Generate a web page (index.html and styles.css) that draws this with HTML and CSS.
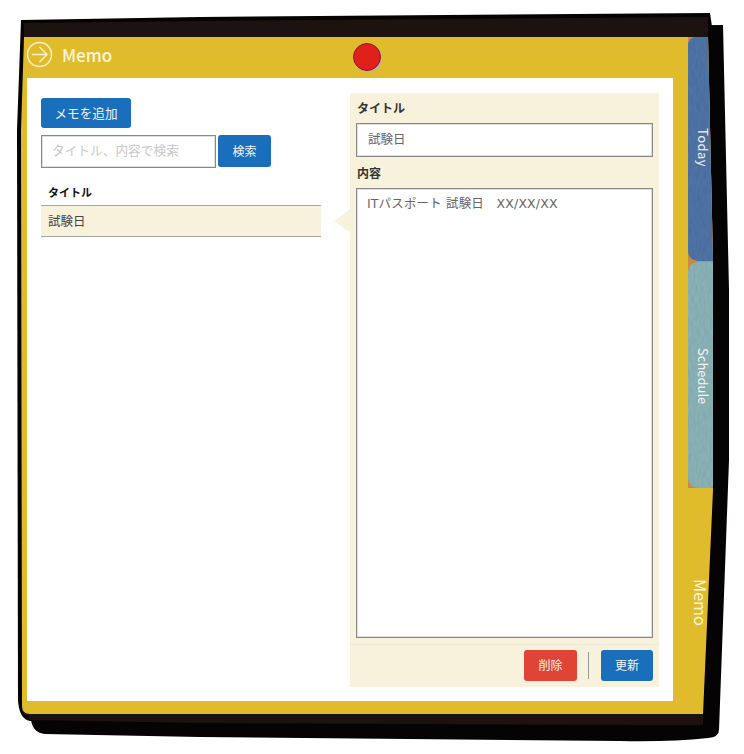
FILE: index.html
```html
<!DOCTYPE html>
<html lang="ja">
<head>
    <meta charset="UTF-8">
    <meta name="viewport" content="width=device-width, initial-scale=1.0">
    <title>Memo</title>
    <link rel="stylesheet" href="styles.css">
</head>
<body>
    <div class="screen">
        <svg class="binder" width="744" height="754" viewBox="0 0 744 754" aria-hidden="true">
            <path class="binder-shadow" d="M30 30 L723 25 L729 290 L729 460 L719 730 Q719 737 708 738 Q670 742 620 741 L200 737 L45 734 Q33 733 31 720 Z"/>
            <path class="binder-shadow" d="M21 20 L200 17 L710 13 L714 40 L714 720 L30 721 Q19 719 18 700 L17 130 Z"/>
            <path class="binder-band" d="M24 23 L200 21 L708 17 L708 60 L703 714 L703 725 L640 725 L200 723 L30 720 L24 700 Z"/>
            <path class="binder-cover" d="M24 37 L708 37 L713 260 L713 490 L703 714 L30 714 Q22 714 22 706 L21 130 Z"/>
            <defs>
                <filter id="grain" x="0" y="0" width="100%" height="100%">
                    <feTurbulence type="fractalNoise" baseFrequency="0.5 0.12" numOctaves="3" seed="4"/>
                    <feColorMatrix values="0 0 0 0 0  0 0 0 0 0  0 0 0 0 0  0.25 0 0 0 -0.08"/>
                    <feComposite in2="SourceGraphic" operator="in"/>
                    <feMerge>
                        <feMergeNode in="SourceGraphic"/>
                        <feMergeNode/>
                    </feMerge>
                </filter>
            </defs>
        </svg>

        <div class="app">
            <div class="main">
                <header class="header">
                    <svg class="back-icon" width="27" height="27" viewBox="0 0 27 27" fill="none" aria-hidden="true">
                        <circle cx="13.5" cy="13.5" r="12"/>
                        <path d="M6 13.5 H20.5 M13.5 6 L21 13.5 L13.5 21"/>
                    </svg>
                    <span class="header-title">Memo</span>
                </header>
                <span class="pin"></span>

                <div class="panel">
                    <section class="list">
                        <button type="button" class="button add-button">メモを追加</button>
                        <form class="search">
                            <input type="text" class="search-input" placeholder="タイトル、内容で検索">
                            <button type="button" class="button search-button">検索</button>
                        </form>
                        <div class="list-head">タイトル</div>
                        <div class="list-row">試験日</div>
                    </section>

                    <section class="detail">
                        <div class="detail-body">
                            <label class="field-label">タイトル</label>
                            <input type="text" class="title-input" value="試験日">
                            <label class="field-label content-label">内容</label>
                            <textarea class="content-input">ITパスポート 試験日　XX/XX/XX</textarea>
                        </div>
                        <div class="detail-foot">
                            <button type="button" class="button danger-button">削除</button>
                            <span class="foot-divider"></span>
                            <button type="button" class="button">更新</button>
                        </div>
                    </section>
                </div>
            </div>

            <nav class="tabs">
                <div class="tab-stack">
                    <a class="tab tab-today">
                        <svg class="tab-grain" aria-hidden="true"><rect width="100%" height="100%" filter="url(#grain)"/></svg>
                        <span>Today</span>
                    </a>
                    <a class="tab tab-schedule">
                        <svg class="tab-grain" aria-hidden="true"><rect width="100%" height="100%" filter="url(#grain)"/></svg>
                        <span>Schedule</span>
                    </a>
                </div>
                <a class="tab-current">Memo</a>
            </nav>
        </div>
    </div>
</body>
</html>
```

FILE: styles.css
```css
body {
    margin: 0;
    background-color: #fff;
    font-family: "Noto Sans CJK JP", "Noto Sans", sans-serif;
    color: #333;
}
.screen {
    position: relative;
    width: 744px;
    height: 754px;
    overflow: hidden;
}
.binder {
    position: absolute;
    top: 0;
    left: 0;
}
.binder-shadow {
    fill: #050304;
}
.binder-band {
    fill: #1c1311;
}
.binder-cover {
    fill: #e0bc2c;
}
.app {
    position: relative;
    display: flex;
    padding: 37px 0 0 24px;
}
.main {
    position: relative;
    width: 649px;
}
.header {
    display: flex;
    align-items: center;
    box-sizing: border-box;
    height: 41px;
    padding: 0 0 6px 2px;
}
.back-icon circle,
.back-icon path {
    stroke: #f8efc4;
    stroke-width: 1.5;
}
.header-title {
    margin-left: 9px;
    font-size: 17px;
    font-weight: 500;
    line-height: 24px;
    color: #fdf6d8;
}
.pin {
    position: absolute;
    top: 6px;
    left: 329px;
    box-sizing: border-box;
    width: 28px;
    height: 28px;
    border: 1px solid #8e1c1c;
    border-radius: 50%;
    background-color: #e0201a;
    box-shadow: 1px 1px 0 #b9b4c0;
}
.panel {
    display: flex;
    gap: 29px;
    box-sizing: border-box;
    height: 623px;
    margin-left: 3px;
    padding: 15px 14px 14px;
    background-color: #fff;
}
.list {
    width: 280px;
    padding-top: 5px;
}
.button {
    height: 31px;
    width: 52px;
    padding: 0 0 2px;
    border: none;
    border-radius: 3px;
    background-color: #196fbb;
    color: #f4f4f4;
    font-family: inherit;
    font-size: 12px;
}
.add-button {
    display: block;
    width: 90px;
    height: 30px;
    font-size: 12.6px;
}
.search {
    display: flex;
    gap: 2px;
    margin-top: 7px;
}
.search-input {
    box-sizing: border-box;
    width: 175px;
    height: 33px;
    padding: 0 10px 4px;
    border: 1px solid #888;
    border-radius: 0;
    outline: none;
    box-shadow: inset 0 0 0 1px rgba(150, 150, 150, 0.3);
    font-family: inherit;
    font-size: 12.7px;
}
.search-input::placeholder {
    color: #c8c8c8;
}
.search-button {
    width: 53px;
    height: 32px;
}
.list-head {
    margin-top: 15px;
    padding-left: 7px;
    font-size: 11px;
    line-height: 18px;
    font-weight: 700;
    color: #111;
}
.list-row {
    box-sizing: border-box;
    height: 32px;
    margin-top: 4px;
    padding-left: 7px;
    border-top: 1px solid #a8a59a;
    border-bottom: 1px solid #a8a59a;
    background-color: #f8f2dd;
    font-size: 12.5px;
    line-height: 29px;
    color: #444;
}
.detail {
    position: relative;
    display: flex;
    flex-direction: column;
    width: 309px;
    background-color: #f8f2dd;
}
.detail::before {
    content: "";
    position: absolute;
    top: 116px;
    left: -16px;
    border-top: 12px solid transparent;
    border-bottom: 12px solid transparent;
    border-right: 16px solid #f8f2dd;
}
.detail-body {
    display: flex;
    flex-direction: column;
    flex: 1;
    padding: 6px 6px 6px;
    border-bottom: 1px solid #efe8d2;
}
.field-label {
    padding-left: 1px;
    font-size: 12px;
    line-height: 18px;
    font-weight: 700;
    color: #333;
}
.content-label {
    margin-top: 7px;
}
.title-input {
    box-sizing: border-box;
    height: 34px;
    margin-top: 6px;
    padding: 0 11px 3px;
    border: 1px solid #888;
    border-radius: 0;
    outline: none;
    box-shadow: inset 0 0 0 1px rgba(150, 150, 150, 0.3);
    font-family: inherit;
    font-size: 12.5px;
    color: #666;
}
.content-input {
    box-sizing: border-box;
    flex: 1;
    margin-top: 6px;
    padding: 5px 10px;
    border: 1px solid #888;
    border-radius: 0;
    outline: none;
    resize: none;
    box-shadow: inset 0 0 0 1px rgba(150, 150, 150, 0.3);
    font-family: "DejaVu Sans", "Noto Sans CJK JP", sans-serif;
    font-size: 12.5px;
    letter-spacing: 0.15px;
    line-height: 20px;
    color: #666;
}
.detail-foot {
    display: flex;
    align-items: center;
    justify-content: flex-end;
    gap: 12px;
    box-sizing: border-box;
    height: 42px;
    padding: 0 6px 1px 0;
}
.danger-button {
    width: 53px;
    background-color: #df4436;
}
.foot-divider {
    width: 1px;
    height: 27px;
    margin-left: -1px;
    background-color: #999;
}
.tabs {
    display: flex;
    flex-direction: column;
    width: 25px;
    margin-left: 15px;
}
.tab-stack {
    display: flex;
    flex-direction: column;
    gap: 1px;
    height: 451px;
    background-color: #c98a45;
    clip-path: polygon(0 0, 20px 0, 25px 224px, 25px 451px, 0 451px);
}
.tab {
    position: relative;
    display: flex;
    overflow: hidden;
    color: #f4f4f0;
    font-size: 13px;
    writing-mode: vertical-rl;
}
.tab span {
    position: relative;
    padding-left: 4px;
}
.tab-grain {
    position: absolute;
    top: 0;
    left: 0;
    width: 100%;
    height: 100%;
}
.tab-today {
    height: 224px;
    padding-top: 91px;
    box-sizing: border-box;
    border-radius: 8px 0 0 10px;
    letter-spacing: 0.4px;
}
.tab-today .tab-grain {
    fill: #4f73a6;
}
.tab-schedule {
    height: 226px;
    padding-top: 86px;
    box-sizing: border-box;
    border-radius: 10px 0 3px 10px;
}
.tab-schedule .tab-grain {
    fill: #8ab2b6;
}
.tab-current {
    margin-top: 91px;
    padding-left: 6px;
    font-size: 16.2px;
    color: #fdf6d8;
    writing-mode: vertical-rl;
}
```
